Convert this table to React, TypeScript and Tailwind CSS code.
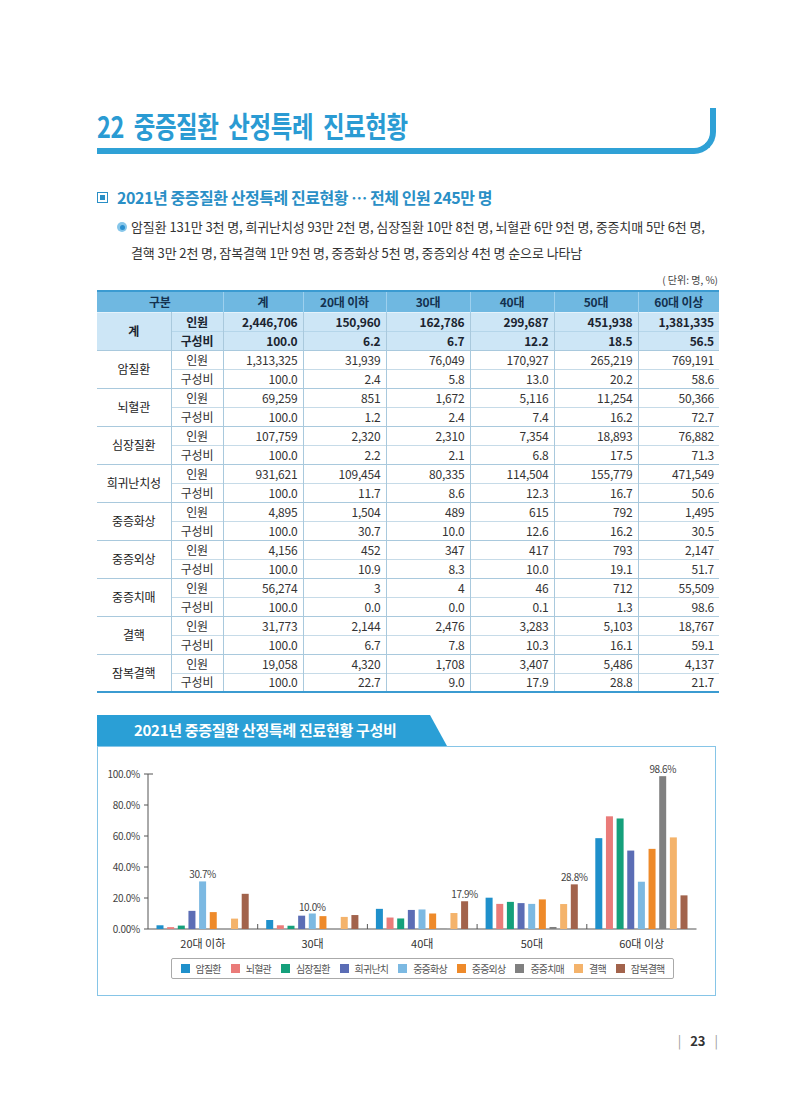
import React from 'react';

type Row = { name: string; n: string[]; p: string[] };

const total: Row = {
  name: '계',
  n: ['2,446,706', '150,960', '162,786', '299,687', '451,938', '1,381,335'],
  p: ['100.0', '6.2', '6.7', '12.2', '18.5', '56.5'],
};

const rows: Row[] = [
  { name: '암질환', n: ['1,313,325', '31,939', '76,049', '170,927', '265,219', '769,191'], p: ['100.0', '2.4', '5.8', '13.0', '20.2', '58.6'] },
  { name: '뇌혈관', n: ['69,259', '851', '1,672', '5,116', '11,254', '50,366'], p: ['100.0', '1.2', '2.4', '7.4', '16.2', '72.7'] },
  { name: '심장질환', n: ['107,759', '2,320', '2,310', '7,354', '18,893', '76,882'], p: ['100.0', '2.2', '2.1', '6.8', '17.5', '71.3'] },
  { name: '희귀난치성', n: ['931,621', '109,454', '80,335', '114,504', '155,779', '471,549'], p: ['100.0', '11.7', '8.6', '12.3', '16.7', '50.6'] },
  { name: '중증화상', n: ['4,895', '1,504', '489', '615', '792', '1,495'], p: ['100.0', '30.7', '10.0', '12.6', '16.2', '30.5'] },
  { name: '중증외상', n: ['4,156', '452', '347', '417', '793', '2,147'], p: ['100.0', '10.9', '8.3', '10.0', '19.1', '51.7'] },
  { name: '중증치매', n: ['56,274', '3', '4', '46', '712', '55,509'], p: ['100.0', '0.0', '0.0', '0.1', '1.3', '98.6'] },
  { name: '결핵', n: ['31,773', '2,144', '2,476', '3,283', '5,103', '18,767'], p: ['100.0', '6.7', '7.8', '10.3', '16.1', '59.1'] },
  { name: '잠복결핵', n: ['19,058', '4,320', '1,708', '3,407', '5,486', '4,137'], p: ['100.0', '22.7', '9.0', '17.9', '28.8', '21.7'] },
];

const series = [
  { name: '암질환', color: '#1f90cb' },
  { name: '뇌혈관', color: '#ea7b79' },
  { name: '심장질환', color: '#15a07b' },
  { name: '희귀난치', color: '#5b6db5' },
  { name: '중증화상', color: '#7cb9e2' },
  { name: '중증외상', color: '#ee8a2a' },
  { name: '중증치매', color: '#808080' },
  { name: '결핵', color: '#f4b36b' },
  { name: '잠복결핵', color: '#a2634c' },
];

const groups = ['20대 이하', '30대', '40대', '50대', '60대 이상'];

const labels: Record<string, string> = {
  '0-4': '30.7%',
  '1-4': '10.0%',
  '2-8': '17.9%',
  '3-8': '28.8%',
  '4-6': '98.6%',
};

const headers = ['계', '20대 이하', '30대', '40대', '50대', '60대 이상'];

const line = 'border-[#a9c9dd]';

function Chart() {
  const axisX = 50;
  const base = 182;
  const scale = 1.55;
  const gw = 109.7;
  const ticks = [0, 20, 40, 60, 80, 100];
  return (
    <svg width="616" height="208" className="block" fontFamily="'Noto Sans CJK KR', 'Noto Sans', sans-serif">
      {ticks.map((t) => {
        const y = base - t * scale;
        return (
          <g key={t}>
            <line x1={axisX - 4} x2={axisX} y1={y} y2={y} stroke="#555" strokeWidth="1" />
            <text x={axisX - 8} y={y + 3.5} fontSize="10" fill="#444" textAnchor="end" letterSpacing="-0.3">
              {t === 0 ? '0.00%' : `${t.toFixed(1)}%`}
            </text>
          </g>
        );
      })}
      <line x1={axisX} x2={axisX + 5} y1={base - 100 * scale} y2={base - 100 * scale} stroke="#555" strokeWidth="1" />
      <line x1={axisX} x2={axisX} y1={base - 100 * scale} y2={base} stroke="#555" strokeWidth="1" />
      <line x1={axisX} x2={axisX + gw * 5} y1={base} y2={base} stroke="#555" strokeWidth="1" />
      {[1, 2, 3, 4].map((k) => (
        <line key={k} x1={axisX + gw * k} x2={axisX + gw * k} y1={base - 5} y2={base} stroke="#555" strokeWidth="1" />
      ))}
      {groups.map((g, gi) => {
        const gx = axisX + gi * gw;
        return (
          <g key={g}>
            {series.map((s, si) => {
              const v = parseFloat(rows[si].p[gi + 1]);
              const h = v * scale;
              const x = gx + 8.5 + si * 10.65;
              const lab = labels[`${gi}-${si}`];
              return (
                <g key={s.name}>
                  {h > 0 && <rect x={x} y={base - h} width="7" height={h} fill={s.color} />}
                  {lab && (
                    <text x={x + 3.5} y={base - h - 3} fontSize="10" fill="#444" textAnchor="middle" letterSpacing="-0.4">
                      {lab}
                    </text>
                  )}
                </g>
              );
            })}
            <text x={gx + gw / 2} y={base + 19} fontSize="11" fill="#333" textAnchor="middle">
              {g}
            </text>
          </g>
        );
      })}
    </svg>
  );
}

export default function App() {
  return (
    <div className="w-[800px] h-[1096px] bg-white font-['Noto_Sans_CJK_KR','Noto_Sans',sans-serif] text-[#333]">
      <div className="pl-[97px] pt-[108px] w-[720px]">
        {/* Title */}
        <div className="w-[619px] h-[46px] border-b-[6px] border-r-[6px] border-[#2fa1d6] rounded-br-[22px]">
          <h1 className="inline-block origin-left scale-x-[0.81] text-[29px] font-bold text-[#2a9bd3] leading-none pt-[3px] tracking-[-0.5px] [word-spacing:6px] whitespace-nowrap">
            22 중증질환 산정특례 진료현황
          </h1>
        </div>

        {/* Subtitle */}
        <div className="mt-[34px] flex items-center gap-[9px] h-[18px]">
          <div className="w-[11px] h-[11px] border-[1.5px] border-[#2a8fc6] flex items-center justify-center">
            <div className="w-[5px] h-[5px] bg-[#2a8fc6]" />
          </div>
          <div className="text-[16px] font-bold text-[#2a8fc6] leading-none tracking-[-0.45px] whitespace-nowrap">
            2021년 중증질환 산정특례 진료현황 … 전체 인원 245만 명
          </div>
        </div>

        {/* Bullet */}
        <div className="mt-[8px] flex pl-[20px] gap-[4px]">
          <div className="mt-[8px] w-[10px] h-[10px] rounded-full bg-[#86c6ea] flex items-center justify-center shrink-0">
            <div className="w-[5px] h-[5px] rounded-full bg-[#2a8fcf]" />
          </div>
          <p className="text-[13px] leading-[26px] tracking-[-0.1px] text-[#333] whitespace-nowrap">
            암질환 131만 3천 명, 희귀난치성 93만 2천 명, 심장질환 10만 8천 명, 뇌혈관 6만 9천 명, 중증치매 5만 6천 명,
            <br />
            결핵 3만 2천 명, 잠복결핵 1만 9천 명, 중증화상 5천 명, 중증외상 4천 명 순으로 나타남
          </p>
        </div>

        <div className="w-[621px] text-right text-[10px] leading-[14px] text-[#444] mt-[7px]">( 단위: 명, %)</div>

        {/* Table */}
        <table className="mt-[3px] border-collapse table-fixed w-[622px] text-[12px] leading-none tracking-[-0.2px]">
          <colgroup>
            <col className="w-[74px]" />
            <col className="w-[52px]" />
            <col className="w-[80px]" />
            <col className="w-[83px]" />
            <col className="w-[84px]" />
            <col className="w-[84px]" />
            <col className="w-[84px]" />
            <col className="w-[81px]" />
          </colgroup>
          <thead>
            <tr className="h-[21px] bg-[#6fb8e1] border-t-2 border-[#3b9bd1] text-[#14314f]">
              <th colSpan={2} className="font-bold p-0">구분</th>
              {headers.map((h) => (
                <th key={h} className="font-bold p-0 border-l border-[#9dd0ee]">{h}</th>
              ))}
            </tr>
          </thead>
          <tbody>
            <tr className="h-[19px] bg-[#cde6f6] font-bold text-[#1b2430] border-t border-[#e4f2fb]">
              <td rowSpan={2} className="text-center p-0">계</td>
              <td className={`text-center p-0 border-l ${line}`}>인원</td>
              {total.n.map((v, i) => (
                <td key={i} className={`text-right pr-[5px] p-0 border-l ${line}`}>{v}</td>
              ))}
            </tr>
            <tr className="h-[19px] bg-[#cde6f6] font-bold text-[#1b2430] border-t border-[#b5d6ea]">
              <td className={`text-center p-0 border-l ${line}`}>구성비</td>
              {total.p.map((v, i) => (
                <td key={i} className={`text-right pr-[5px] p-0 border-l ${line}`}>{v}</td>
              ))}
            </tr>
            {rows.map((r, ri) => (
              <React.Fragment key={r.name}>
                <tr className={`h-[19px] border-t ${line}`}>
                  <td rowSpan={2} className="text-center p-0 text-[#222]">{r.name}</td>
                  <td className={`text-center p-0 border-l ${line}`}>인원</td>
                  {r.n.map((v, i) => (
                    <td key={i} className={`text-right pr-[5px] p-0 border-l ${line}`}>{v}</td>
                  ))}
                </tr>
                <tr className={`h-[19px] border-t border-[#c6dbe8] ${ri === rows.length - 1 ? 'border-b-2 border-b-[#3b9bd1]' : ''}`}>
                  <td className={`text-center p-0 border-l ${line}`}>구성비</td>
                  {r.p.map((v, i) => (
                    <td key={i} className={`text-right pr-[5px] p-0 border-l ${line}`}>{v}</td>
                  ))}
                </tr>
              </React.Fragment>
            ))}
          </tbody>
        </table>

        {/* Chart */}
        <div className="mt-[22px]">
          <div className="w-[350px] h-[31px] bg-[#2a9fd6] [clip-path:polygon(0_0,calc(100%-17px)_0,100%_100%,0_100%)] flex items-center pl-[37px]">
            <span className="text-white font-bold text-[15px] tracking-[-0.3px] whitespace-nowrap">
              2021년 중증질환 산정특례 진료현황 구성비
            </span>
          </div>
          <div className="w-[619px] h-[250px] border-[1.5px] border-[#86c5e7]">
            <Chart />
            <div className="flex justify-center pl-[50px] pr-[18px] mt-[3px]">
              <div className="flex items-center gap-[10px] h-[21px] px-[9px] border border-[#aaaaaa] rounded-[2px]">
                {series.map((s) => (
                  <div key={s.name} className="flex items-center gap-[6px]">
                    <div className="w-[9px] h-[9px]" style={{ backgroundColor: s.color }} />
                    <span className="text-[10px] leading-none text-[#555] tracking-[-0.8px]">{s.name}</span>
                  </div>
                ))}
              </div>
            </div>
          </div>
        </div>

        {/* Page number */}
        <div className="w-[621px] mt-[38px] flex justify-end items-center gap-[9px] text-[13px] leading-none">
          <span className="text-[#999]">|</span>
          <span className="font-bold text-[#333]">23</span>
          <span className="text-[#999]">|</span>
        </div>
      </div>
    </div>
  );
}
